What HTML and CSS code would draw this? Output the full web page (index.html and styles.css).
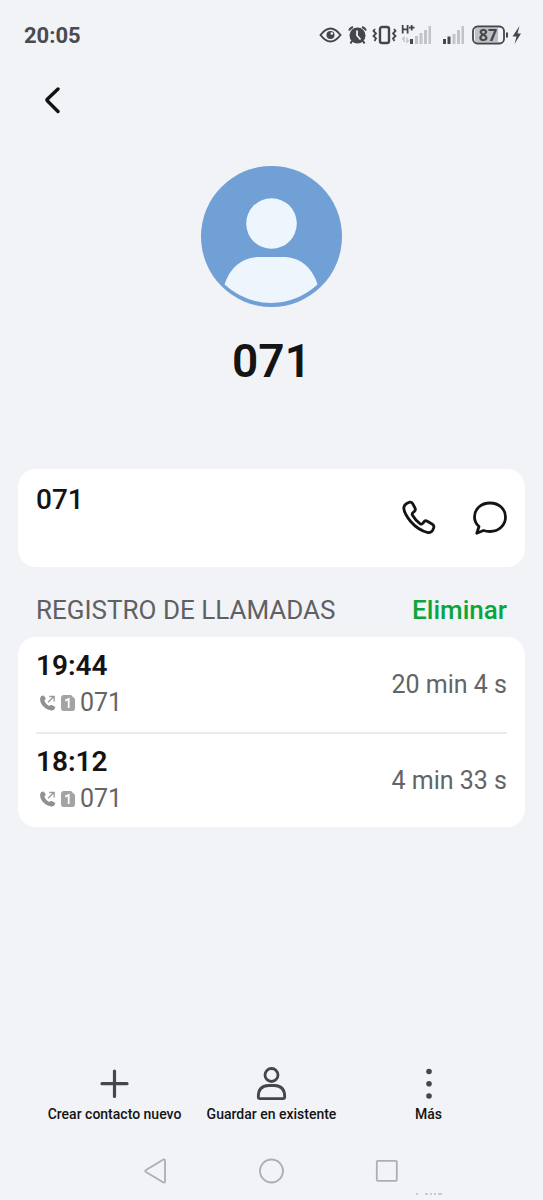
FILE: index.html
```html
<!DOCTYPE html>
<html lang="es">
<head>
<meta charset="utf-8">
<meta name="viewport" content="width=device-width, initial-scale=1">
<title>071</title>
<link rel="stylesheet" href="styles.css">
</head>
<body>
<svg class="defs" aria-hidden="true">
  <symbol id="outgoing" viewBox="0 0 16 16">
    <path d="M1.500.9 3.200.4q.9 0 1.200.8L5.500 3.500q.3 1-.5 1.600l-.8.7q1.600 3.500 5 5.300l1-.9q.7-.5 1.500-.1l2.900 1.400q.8.5.5 1.500-.9 2.600-3.400 2.600Q6.800 15.100 3.400 11.600 0 8 .1 3.500.3 1.500 1.500.9Z" fill="#919191"/>
    <path d="M8 7.200 14 1.600M9.300 1.500H14.200V6.400" fill="none" stroke="#9a9a9a" stroke-width="1.300"/>
  </symbol>
  <symbol id="sim" viewBox="0 0 14 16">
    <path d="M3 0H10L14 4V13Q14 16 11 16H3Q0 16 0 13V3Q0 0 3 0Z" fill="#a3a3a3"/>
    <path d="M4.300 5.600 7.700 4V13" fill="none" stroke="#fff" stroke-width="1.800"/>
  </symbol>
</svg>
<div class="screen">
  <header class="status">
    <time class="clock">20:05</time>
    <svg class="status-icons" viewBox="0 0 204 24" aria-hidden="true">
      <g fill="none" stroke="#45464a" stroke-width="2">
        <path d="M1.500 12Q11.500-1 21.500 12 11.500 25 1.500 12Z"/>
        <circle cx="11.500" cy="12" r="4" fill="#45464a" stroke="none"/>
        <circle cx="12.800" cy="10.500" r="1.300" fill="#f1f3f7" stroke="none"/>
        <circle cx="38.500" cy="12.500" r="8" fill="#45464a" stroke="none"/>
        <path d="M30 7.500Q31 5 34 4M47 7.500Q46 5 43 4M33 18 31.500 20.500M44 18 45.500 20.500"/>
        <path d="M38 7.500V12.500L41.500 16.500" stroke="#f1f3f7" stroke-width="1.800"/>
        <rect x="61" y="4" width="9" height="16" rx="2" stroke-width="2.400"/>
        <path d="M56 6 54.500 8 57 10.500 54.500 13 57 15.500 55.500 18M75 6 76.500 8 74 10.500 76.500 13 74 15.500 75.500 18" stroke-width="1.800"/>
      </g>
      <path d="M83.700 2V10.500M88.600 2V10.500M83.500 6.300H88.500M90 4.700H95.500M92.700 2V7.500" fill="none" stroke="#45464a" stroke-width="1.800"/>
      <path d="M85 19V14.500L83 16.500M88 14.500V19L90 17" fill="none" stroke="#c3c4c8" stroke-width="1.400"/>
      <path d="M91 16H94V21H91ZM124 16H127V21H124ZM128.500 13.500H131.500V21H128.500Z" fill="#45464a"/>
      <path d="M96 13H99V21H96ZM100.500 10H103.500V21H100.500ZM105 7H108V21H105ZM109.500 3H112V21H109.500ZM133.500 11H136.500V21H133.500ZM138 7H141V21H138ZM142.500 3H145V21H142.500Z" fill="#c3c4c8"/>
      <path d="M156 5H179V19H156Z" fill="#bfc0c4"/>
      <rect x="154" y="3.500" width="31" height="17" rx="4.500" fill="none" stroke="#45464a" stroke-width="1.800"/>
      <path d="M188 9.500V14.500" stroke="#45464a" stroke-width="2"/>
      <path d="M200.500 3 193.500 13.500H197.500L195.500 21 202 10.500H198.500Z" fill="#45464a"/>
      <text class="battery" x="169" y="18" text-anchor="middle">87</text>
    </svg>
  </header>

  <button class="back" aria-label="Atrás">
    <svg width="16" height="28" viewBox="0 0 16 28" aria-hidden="true"><path d="M14 3 3.500 13Q2.500 14 3.500 15L14 25.500" fill="none" stroke="#121212" stroke-width="3.400" stroke-linecap="round"/></svg>
  </button>

  <main>
    <section class="profile">
      <svg class="avatar" viewBox="0 0 142 142" aria-hidden="true">
        <circle cx="70.500" cy="70.500" r="70.500" fill="#70a0d5"/>
        <circle cx="70.500" cy="57.500" r="25.300" fill="#eff5fd"/>
        <path d="M23.500 118.500C29.500 99.500 43.500 91 58.500 91H82.500C97.500 91 110.500 99.500 116.500 118.500Q96.500 136.500 70.500 137 43.500 136.500 23.500 118.500Z" fill="#eff5fd"/>
      </svg>
      <h1>071</h1>
    </section>

    <section class="card number">
      <span class="number-text">071</span>
      <div class="actions">
        <button aria-label="Llamar">
          <svg width="36" height="36" viewBox="0 0 36 36" aria-hidden="true"><path d="M6.500 3 8.500 2.200Q10.500 1.700 11.700 3.700L14 8Q15 10.200 13.200 11.500L12.200 12.300Q10.600 13.500 11.500 15.300 14.500 20.500 19 23.700 20.700 24.700 22 23.200L22.600 22.200Q24 20 26.300 21.200L31 24Q33.500 25.500 32.700 27.700L31.800 30Q30.500 33 26.500 32.500 17 30 9.700 21.500 3.500 14 2.800 8.500 2.600 4.800 6.500 3Z" fill="none" stroke="#141414" stroke-width="2.800" stroke-linejoin="round"/></svg>
        </button>
        <button aria-label="Mensaje">
          <svg width="36" height="36" viewBox="0 0 36 36" aria-hidden="true"><path d="M8 26.500Q3.500 22.500 3.500 17C3.500 9 10 3 19 3S34.500 9 34.500 17 28 31.500 19 31.500Q15.500 31.500 12.500 30.500L5.800 33.200 8 26.500Z" fill="none" stroke="#141414" stroke-width="2.800" stroke-linejoin="round"/></svg>
        </button>
      </div>
    </section>

    <div class="log-head">
      <h2>REGISTRO DE LLAMADAS</h2>
      <button class="clear">Eliminar</button>
    </div>

    <ul class="card log">
      <li>
        <div>
          <time>19:44</time>
          <p class="call"><svg width="16" height="16" aria-hidden="true"><use href="#outgoing"/></svg><svg width="14" height="16" aria-hidden="true"><use href="#sim"/></svg><span>071</span></p>
        </div>
        <span class="duration">20 min 4 s</span>
      </li>
      <li>
        <div>
          <time>18:12</time>
          <p class="call"><svg width="16" height="16" aria-hidden="true"><use href="#outgoing"/></svg><svg width="14" height="16" aria-hidden="true"><use href="#sim"/></svg><span>071</span></p>
        </div>
        <span class="duration">4 min 33 s</span>
      </li>
    </ul>
  </main>

  <nav class="toolbar">
    <button>
      <svg width="36" height="36" viewBox="0 0 36 36" aria-hidden="true"><path d="M17.500 5V30.500M5 17.700H30" stroke="#45464a" stroke-width="3.200" stroke-linecap="round"/></svg>
      <span>Crear contacto nuevo</span>
    </button>
    <button>
      <svg width="36" height="36" viewBox="0 0 36 36" aria-hidden="true"><g fill="none" stroke="#45464a" stroke-width="2.800"><circle cx="17.500" cy="9" r="6.500"/><path d="M4.300 31Q4 20 14.500 19.500H20.500Q31 20 30.700 31 30.700 32.600 29 32.600H6Q4.300 32.600 4.300 31Z"/></g></svg>
      <span>Guardar en existente</span>
    </button>
    <button>
      <svg width="36" height="36" viewBox="0 0 36 36" aria-hidden="true"><g fill="#45464a"><circle cx="18" cy="5.500" r="2.800"/><circle cx="18" cy="17.700" r="2.800"/><circle cx="18" cy="30" r="2.800"/></g></svg>
      <span>Más</span>
    </button>
  </nav>

  <footer class="system">
    <button aria-label="Volver"><svg width="26" height="26" viewBox="0 0 26 26" aria-hidden="true"><path d="M20 1.700Q22 .7 22 3V23Q22 25.300 20 24.300L3 14Q1.500 13 3 12Z" fill="none" stroke="#adaeb2" stroke-width="1.800"/></svg></button>
    <button aria-label="Inicio"><svg width="26" height="26" viewBox="0 0 26 26" aria-hidden="true"><circle cx="12.500" cy="13" r="11.500" fill="none" stroke="#adaeb2" stroke-width="1.800"/></svg></button>
    <button aria-label="Recientes"><svg width="26" height="26" viewBox="0 0 26 26" aria-hidden="true"><rect x="1.800" y="2.800" width="20" height="20" rx="1" fill="none" stroke="#adaeb2" stroke-width="1.800"/></svg></button>
    <svg class="edge" width="28" height="2" viewBox="0 0 28 2" aria-hidden="true"><path d="M1 1H3M10 1H13M15 1H17M19 1H21M23 1H27" stroke="#a0a1a5"/></svg>
  </footer>
</div>
</body>
</html>
```
FILE: styles.css
```css
* { box-sizing: border-box; }
body {
  margin: 0;
  background: #f1f3f7;
  color: #141414;
  font-family: Roboto, "Liberation Sans", sans-serif;
}
h1, h2, p, ul { margin: 0; padding: 0; }
button {
  border: 0;
  padding: 0;
  background: none;
  color: inherit;
  font: inherit;
  cursor: pointer;
}
svg { display: block; flex: none; }
.defs { width: 0; height: 0; position: absolute; }

.screen {
  display: flex;
  flex-direction: column;
  min-height: 100vh;
}
.status {
  display: flex;
  align-items: center;
  justify-content: space-between;
  height: 70px;
  padding: 0 20px 0 24px;
}
.clock {
  font-size: 22px;
  font-weight: 700;
  color: #4a4b4e;
}
.status-icons { width: 204px; height: 24px; }
.battery {
  font-family: "Open Sans", Roboto, sans-serif;
  font-size: 16px;
  font-weight: 700;
  fill: #45464a;
}
.back {
  display: flex;
  align-self: flex-start;
  align-items: center;
  height: 60px;
  padding: 0 44px;
}
main { padding: 0 18px; }
.profile {
  display: flex;
  flex-direction: column;
  align-items: center;
  padding: 36px 0 80px;
}
.avatar { width: 142px; height: 142px; }
h1 {
  margin-top: 25px;
  font-size: 46px;
  line-height: 56px;
  font-weight: 600;
}
.card {
  background: #fff;
  border-radius: 18px;
}
.number {
  display: flex;
  justify-content: space-between;
  align-items: center;
  min-height: 98px;
  padding: 0 18px;
}
.number-text {
  align-self: flex-start;
  padding-top: 14px;
  font-size: 28px;
  line-height: 34px;
  font-weight: 500;
}
.actions { display: flex; gap: 34px; }
.log-head {
  display: flex;
  justify-content: space-between;
  align-items: center;
  height: 70px;
  padding: 16px 18px 0;
}
h2, .clear { font-size: 26px; line-height: 32px; }
h2 {
  font-weight: 400;
  color: #5f6063;
}
.clear {
  font-weight: 500;
  color: #0ba53e;
}
.log {
  list-style: none;
  padding: 0 18px;
}
.log li {
  display: flex;
  justify-content: space-between;
  align-items: center;
  height: 95px;
}
.log li + li { border-top: 2px solid #ebebed; }
.log time {
  display: block;
  font-size: 28px;
  line-height: 36px;
  font-weight: 600;
}
.call {
  display: flex;
  align-items: center;
  gap: 5px;
  padding-left: 4px;
  font-size: 25px;
  line-height: 38px;
  color: #636466;
}
.duration {
  font-size: 25px;
  color: #636466;
}
.toolbar {
  display: grid;
  grid-template-columns: repeat(3, 1fr);
  margin-top: auto;
  padding: 0 36px;
}
.toolbar button {
  display: flex;
  flex-direction: column;
  align-items: center;
  gap: 2px;
  font-size: 14px;
  line-height: 20px;
  font-weight: 500;
  white-space: nowrap;
}
.system {
  position: relative;
  display: flex;
  justify-content: center;
  align-items: center;
  gap: 90px;
  height: 76px;
  padding-top: 18px;
}
.edge {
  position: absolute;
  bottom: 5px;
  left: 415px;
}
```
